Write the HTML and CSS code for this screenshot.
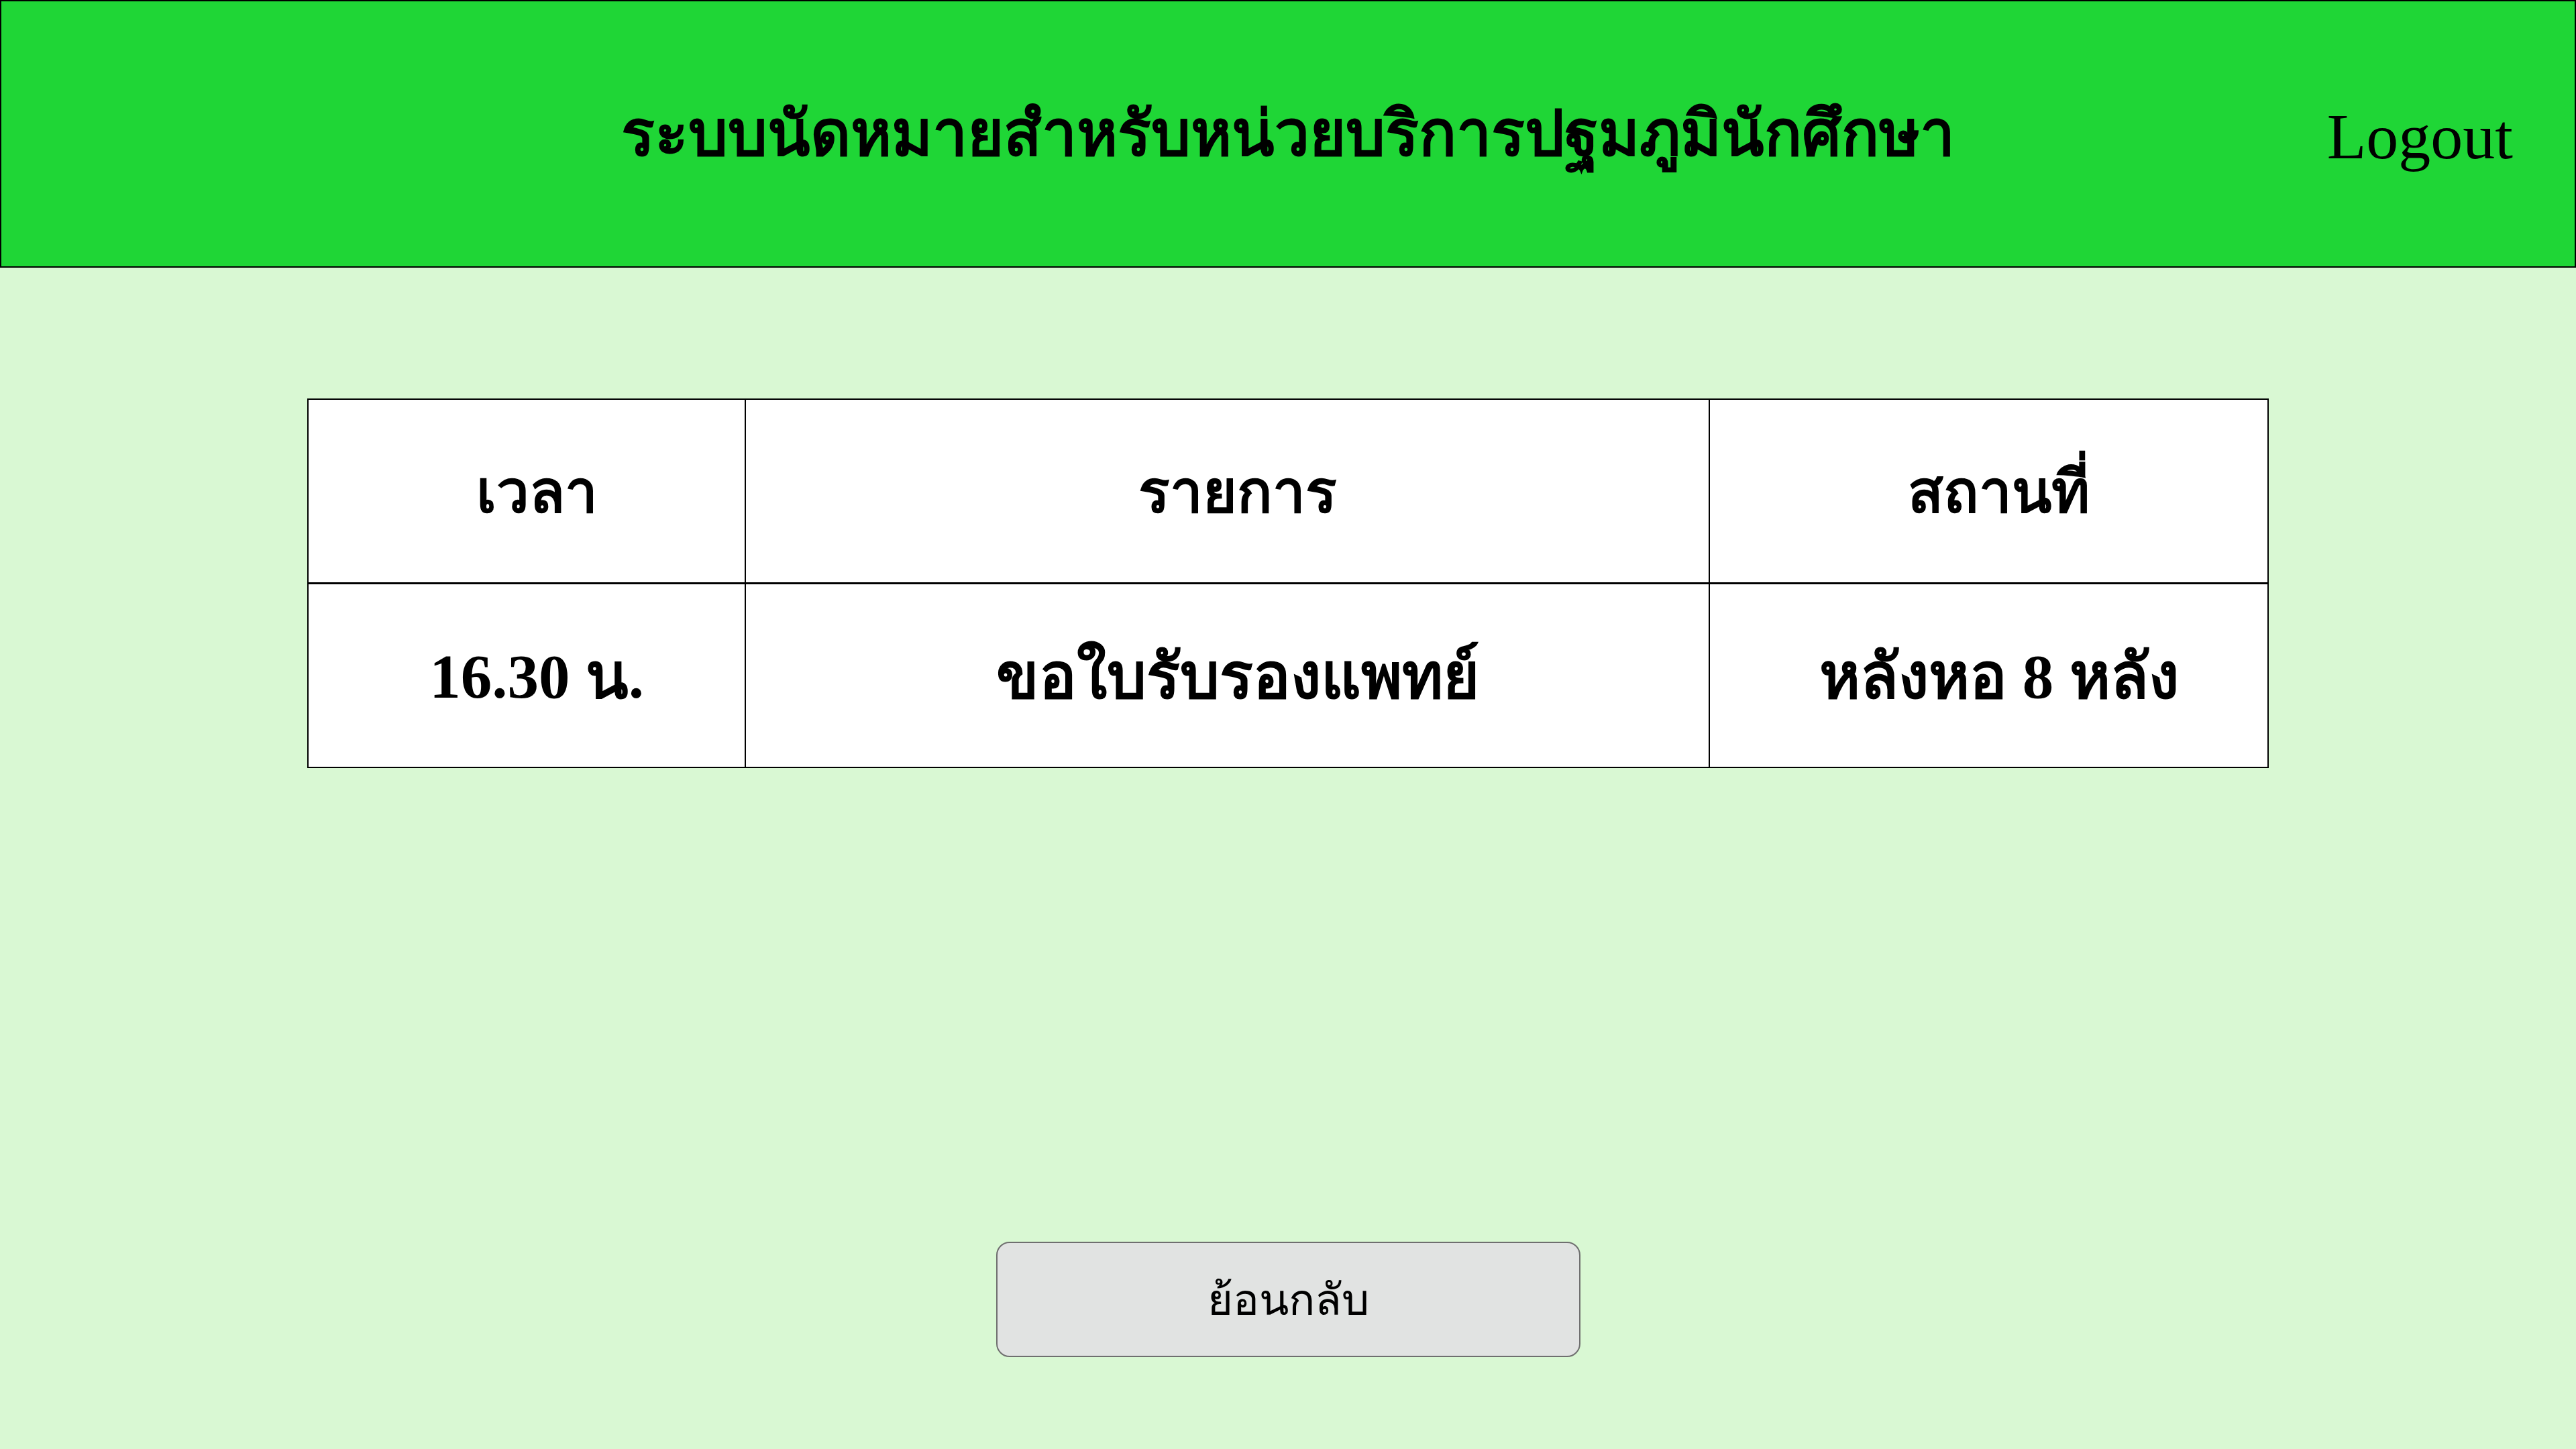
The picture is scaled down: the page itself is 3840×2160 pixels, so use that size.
FILE: index.html
```html
<!DOCTYPE html>
<html lang="th">
<head>
<meta charset="utf-8">
<title>ระบบนัดหมาย</title>
<link rel="stylesheet" href="styles.css">
</head>
<body>
<header class="topbar">
  <div class="spacer"></div>
  <h1 class="title">ระบบนัดหมายสำหรับหน่วยบริการปฐมภูมินักศึกษา</h1>
  <a class="logout" href="#">Logout</a>
</header>
<main class="content">
  <table class="schedule">
    <colgroup>
      <col class="c-time">
      <col class="c-item">
      <col class="c-place">
    </colgroup>
    <thead>
      <tr><th>เวลา</th><th>รายการ</th><th>สถานที่</th></tr>
    </thead>
    <tbody>
      <tr><td>16.30 น.</td><td>ขอใบรับรองแพทย์</td><td>หลังหอ 8 หลัง</td></tr>
    </tbody>
  </table>
  <div class="actions">
    <button class="back" type="button">ย้อนกลับ</button>
  </div>
</main>
</body>
</html>
```

FILE: styles.css
```css
html, body {
  margin: 0;
  padding: 0;
}
body {
  background: #d9f8d3;
  font-family: "Liberation Serif", serif;
  color: #000;
  width: 3840px;
  height: 2160px;
  overflow: hidden;
}
.topbar {
  box-sizing: border-box;
  height: 399px;
  background: #1fd636;
  border: 2px solid #000;
  display: grid;
  grid-template-columns: 1fr auto 1fr;
  align-items: center;
}
.title {
  margin: 0;
  font-size: 93px;
  font-weight: bold;
  line-height: 1;
}
.logout {
  justify-self: end;
  margin-right: 92px;
  margin-top: 8px;
  font-size: 96px;
  color: #000;
  text-decoration: none;
}
.content {
  display: flex;
  flex-direction: column;
  align-items: center;
  padding-top: 195px;
}
.schedule {
  width: 2922px;
  border-collapse: collapse;
  background: #fff;
  border: 2px solid #000;
  table-layout: fixed;
}
.c-time { width: 652px; }
.c-item { width: 1437px; }
.c-place { width: 833px; }
.schedule th,
.schedule td {
  border-left: 2px solid #000;
  border-right: 2px solid #000;
  text-align: center;
  font-weight: bold;
  padding: 0 0 0 30px;
  height: 272px;
}
.schedule th {
  font-size: 87px;
}
.schedule td {
  font-size: 93px;
}
.schedule thead th {
  border-bottom: 3px solid #000;
}
.actions {
  margin-top: 706px;
}
.back {
  box-sizing: border-box;
  width: 871px;
  height: 172px;
  background: #e1e3e2;
  border: 2px solid #6f6f6f;
  border-radius: 20px;
  font-family: "Liberation Serif", serif;
  font-size: 65px;
  color: #000;
  padding: 0;
}
```
